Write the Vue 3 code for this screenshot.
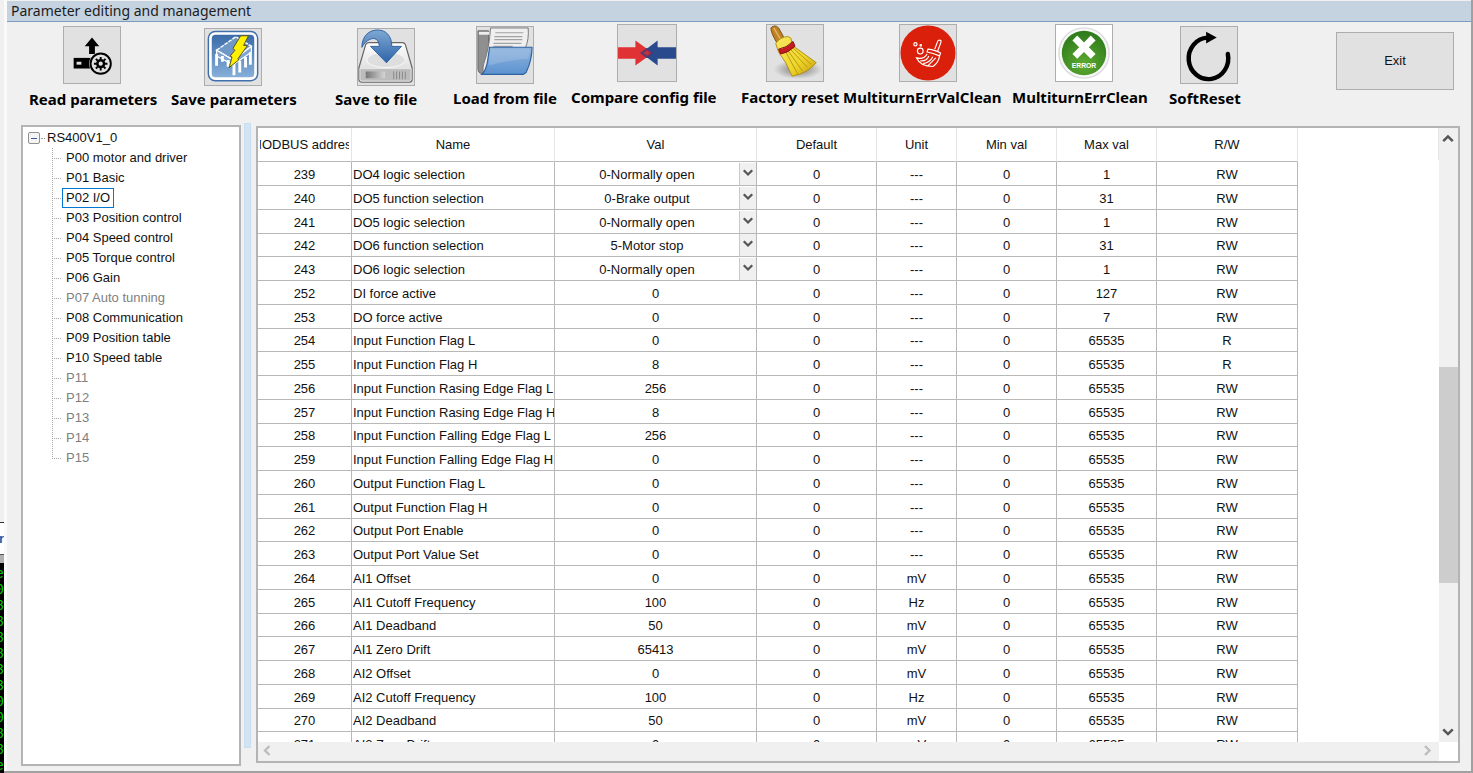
<script setup>
import { ref } from 'vue'

const groups = [
  { name: 'P00 motor and driver' },
  { name: 'P01 Basic' },
  { name: 'P02 I/O' },
  { name: 'P03 Position control' },
  { name: 'P04 Speed control' },
  { name: 'P05 Torque control' },
  { name: 'P06 Gain' },
  { name: 'P07 Auto tunning', off: true },
  { name: 'P08 Communication' },
  { name: 'P09 Position table' },
  { name: 'P10 Speed table' },
  { name: 'P11', off: true },
  { name: 'P12', off: true },
  { name: 'P13', off: true },
  { name: 'P14', off: true },
  { name: 'P15', off: true },
]
const selected = ref('P02 I/O')

const columns = ['MODBUS address', 'Name', 'Val', 'Default', 'Unit', 'Min val', 'Max val', 'R/W']

const row = (address, name, val, max = '65535', unit = '---', rw = 'RW', combo = false) => ({
  address, name, val, max, unit, rw, combo,
})
const rows = [
  row(239, 'DO4 logic selection', '0-Normally open', '1', '---', 'RW', true),
  row(240, 'DO5 function selection', '0-Brake output', '31', '---', 'RW', true),
  row(241, 'DO5 logic selection', '0-Normally open', '1', '---', 'RW', true),
  row(242, 'DO6 function selection', '5-Motor stop', '31', '---', 'RW', true),
  row(243, 'DO6 logic selection', '0-Normally open', '1', '---', 'RW', true),
  row(252, 'DI force active', '0', '127'),
  row(253, 'DO force active', '0', '7'),
  row(254, 'Input Function Flag L', '0', '65535', '---', 'R'),
  row(255, 'Input Function Flag H', '8', '65535', '---', 'R'),
  row(256, 'Input Function Rasing Edge Flag L', '256'),
  row(257, 'Input Function Rasing Edge Flag H', '8'),
  row(258, 'Input Function Falling Edge Flag L', '256'),
  row(259, 'Input Function Falling Edge Flag H', '0'),
  row(260, 'Output Function Flag L', '0'),
  row(261, 'Output Function Flag H', '0'),
  row(262, 'Output Port Enable', '0'),
  row(263, 'Output Port Value Set', '0'),
  row(264, 'AI1 Offset', '0', '65535', 'mV'),
  row(265, 'AI1 Cutoff Frequency', '100', '65535', 'Hz'),
  row(266, 'AI1 Deadband', '50', '65535', 'mV'),
  row(267, 'AI1 Zero Drift', '65413', '65535', 'mV'),
  row(268, 'AI2 Offset', '0', '65535', 'mV'),
  row(269, 'AI2 Cutoff Frequency', '100', '65535', 'Hz'),
  row(270, 'AI2 Deadband', '50', '65535', 'mV'),
  row(271, 'AI2 Zero Drift', '0', '65535', 'mV'),
]

const consoleLines = ['e', '0', '8', '8', '8', '8', '3', '3', '0', '0', '8', '8', 'e']
</script>

<template>
  <div class="screen">
    <div class="behind" aria-hidden="true">
      <div class="behind-top"></div>
      <div class="behind-tab">r</div>
      <div class="behind-console"><span v-for="(c, i) in consoleLines" :key="i">{{ c }}</span></div>
    </div>

    <main class="window">
      <h1 class="title">Parameter editing and management</h1>

      <div class="toolbar">
        <div class="tools">
          <div class="icons">
            <button id="t-read" class="tool mid" type="button">
              <svg viewBox="0 0 58 58">
                <path d="M29 11l7.500 9h-4.500v8h-6v-8h-4.500z" fill="#000" />
                <path d="M10 32h21v11h-21z" fill="#000" />
                <path d="M13 36h5v3h-5z" fill="#e1e1e1" />
                <circle cx="38" cy="38" r="12" fill="#e1e1e1" />
                <circle cx="38" cy="38" r="10.500" fill="#e1e1e1" stroke="#000" stroke-width="2" />
                <circle cx="38" cy="38" r="3.500" fill="none" stroke="#000" stroke-width="2.600" />
                <path d="M38 31v3M38 42v3M31 38h3M42 38h3M33 33l2 2M41 41l2 2M43 33l-2 2M35 41l-2 2" stroke="#000" stroke-width="2" />
              </svg>
            </button>
            <button id="t-save" class="tool low" type="button">
              <svg viewBox="0 0 58 58">
                <defs>
                  <linearGradient id="chip" x1="0" y1="0" x2="0" y2="1">
                    <stop offset="0" stop-color="#3b6ba8" /><stop offset="1" stop-color="#86afd9" />
                  </linearGradient>
                </defs>
                <rect x="3.500" y="2.500" width="51" height="51" rx="7" fill="#fff" stroke="#3f70ac" stroke-width="1.500" />
                <rect x="7" y="6" width="44" height="44" rx="4" fill="url(#chip)" />
                <path d="M12 22L32 8l16 10L29 32z" fill="#6f98c8" stroke="#fff" stroke-width="1.500" stroke-dasharray="4 1" />
                <path d="M12 22v6l17 9v-5zM29 37l19-13v-6L29 32z" fill="#7fa5d0" stroke="#fff" stroke-width="1.300" />
                <path d="M12 26v12M18 28v6M24 32v7M30 36v12M36 33v12M42 29v11M47 24v13" stroke="#fff" stroke-width="3" />
                <path d="M37 7h8l-5 10h4L34 31l1 1-10 8 3-11-2-1 5-6-2-2z" fill="#ffef00" stroke="#55531c" stroke-width="1" />
              </svg>
            </button>
            <button id="t-tofile" class="tool low" type="button">
              <svg viewBox="0 0 58 58">
                <defs>
                  <linearGradient id="disk" x1="0" y1="0" x2="0" y2="1">
                    <stop offset="0" stop-color="#fff" /><stop offset="1" stop-color="#d0d0d0" />
                  </linearGradient>
                  <linearGradient id="slot" x1="0" y1="0" x2="1" y2="0">
                    <stop offset="0" stop-color="#777" /><stop offset="1" stop-color="#d5d5d5" />
                  </linearGradient>
                  <linearGradient id="drop" x1="0" y1="0" x2="0" y2="1">
                    <stop offset="0" stop-color="#7fa8d4" /><stop offset="1" stop-color="#2e64a8" />
                  </linearGradient>
                </defs>
                <path d="M11 14h35q2 0 3 2l7 24v12q0 3-3 3H4q-3 0-3-3V40l7-24q1-2 3-2z" fill="url(#disk)" stroke="#666" stroke-width="1.300" />
                <ellipse cx="29" cy="32" rx="20" ry="8" fill="#dedede" stroke="#f8f8f8" />
                <path d="M2 41h53v11q0 2-2 2H4q-2 0-2-2z" fill="#bcbcbc" stroke="#eee" stroke-width=".8" />
                <path d="M8 44h20v7H8z" fill="url(#slot)" />
                <path d="M37 44v8M40 44v8M43 44v8M46 44v8M49 44v8" stroke="#888" stroke-width="1" />
                <path d="M4 19C4 7 12 1 20 1c9 0 15 6 15 17h10L29.500 35 13 18h9c0-7-5-10-10-7-3 1-6 4-8 8z" fill="url(#drop)" stroke="#2f61a0" stroke-width="1" />
              </svg>
            </button>
            <button id="t-load" class="tool mid" type="button">
              <svg viewBox="0 0 58 58">
                <defs>
                  <linearGradient id="folder" x1="0" y1="0" x2="0" y2="1">
                    <stop offset="0" stop-color="#92b6dd" /><stop offset="1" stop-color="#5b92cf" />
                  </linearGradient>
                </defs>
                <path d="M1 4h11v44H5q-4 0-4-5z" fill="#8f8f8f" stroke="#666" />
                <path d="M2 5h11v3H2z" fill="#eee" />
                <path d="M14 1h39q1 12-3 21l-8 20-34 5Q5 47 7 38q6-17 7-37z" fill="#efefef" stroke="#777" />
                <path d="M19 6h29M18 10h29M18 13h29M17 17h29M17 20h20" stroke="#a2a2a2" stroke-width="1.200" />
                <path d="M13 21h44q0 13-6 26l-3 2H5q4-3 6-14z" fill="url(#folder)" stroke="#2e62a1" stroke-width="1.200" />
                <path d="M14 23h41q-1 6-2 10-20 1-41 7z" fill="#a9c6e6" opacity=".4" />
              </svg>
            </button>
            <button id="t-compare" class="tool wide" type="button">
              <svg viewBox="0 0 60 58">
                <path d="M60 23H41v-7L24 29l17 13v-7h19z" fill="#2a4a8e" />
                <path d="M0 23h18v-7l18 13-18 13v-7H0z" fill="#e03134" />
                <path d="M24 29l6-4.500 6 4.500-6 4.500z" fill="#95304e" stroke="#4b3c77" stroke-width="1.500" />
                <path d="M27 29l3-2 3 2-3 2z" fill="#c63442" />
              </svg>
            </button>
            <button id="t-factory" class="tool" type="button">
              <svg viewBox="0 0 58 58">
                <defs>
                  <linearGradient id="straw" x1="0" y1="0" x2="1" y2="1">
                    <stop offset="0" stop-color="#f8e763" /><stop offset=".6" stop-color="#eed72b" /><stop offset="1" stop-color="#c69c0e" />
                  </linearGradient>
                  <radialGradient id="shade"><stop offset="0" stop-color="#777" /><stop offset="1" stop-color="#e1e1e1" /></radialGradient>
                </defs>
                <ellipse cx="32" cy="46" rx="25" ry="10" fill="url(#shade)" />
                <path d="M4 3q4-4 8 0l5 9-7 6Q4 8 4 3z" fill="#bd8128" stroke="#80500f" />
                <path d="M7 3l7 12" stroke="#e4b45c" stroke-width="1.500" />
                <path d="M9 19q5-7 13-7l3 2 1 7 25 18q-9 11-25 14Q20 38 12 28z" fill="url(#straw)" stroke="#b38d12" />
                <path d="M20 29l12 22M22 27l15 21M24 25l18 19M26 23l20 18" stroke="#bc960f" stroke-width="1" />
                <path d="M12 25q8-1 15-8l2 5q-7 7-15 8z" fill="#c51b20" stroke="#821014" />
              </svg>
            </button>
            <button id="t-valclean" class="tool" type="button">
              <svg viewBox="0 0 58 58">
                <circle cx="29" cy="29" r="28.500" fill="#da200b" />
                <g fill="none" stroke="#fff" stroke-width="1.200">
                  <circle cx="16" cy="20" r="1.700" /><circle cx="21.500" cy="21" r=".8" /><circle cx="21" cy="27" r="3" />
                  <path d="M36 25l3-8q1-2 3-1 1 0 0 3l-3 8" />
                  <path d="M29 25q8 1 13 4l-1 3q-7-3-13-4z" />
                  <path d="M28 30q-3 6-11 4 4 9 17 9 6-4 7-11M21 37q6 1 9-5M24 40q7-1 10-7M29 42l8-8" />
                </g>
              </svg>
            </button>
            <button id="t-errclean" class="tool" type="button">
              <svg viewBox="0 0 58 58">
                <defs>
                  <radialGradient id="green" cx=".5" cy=".75" r=".7">
                    <stop offset="0" stop-color="#5eaa31" /><stop offset="1" stop-color="#2f7d1c" />
                  </radialGradient>
                </defs>
                <rect width="58" height="58" fill="#fff" />
                <circle cx="29" cy="29" r="26" fill="#f7f7f7" stroke="#dcdcdc" stroke-width="1.500" />
                <circle cx="29" cy="29" r="23" fill="url(#green)" />
                <path d="M22 11l7 7 7-7 5 5-7 7 7 7-5 5-7-7-7 7-5-5 7-7-7-7z" fill="#fff" />
                <text x="29" y="45" text-anchor="middle" class="error-text">ERROR</text>
              </svg>
            </button>
            <button id="t-reset" class="tool mid" type="button">
              <svg viewBox="0 0 58 58">
                <path d="M48.500 28a20.500 21.500 0 1 1-21-17" fill="none" stroke="#000" stroke-width="4.600" stroke-linecap="round" />
                <path d="M26 5l11 6-11 6z" fill="#000" />
              </svg>
            </button>
          </div>
          <div class="labels">
            <label class="low" for="t-read">Read parameters</label>
            <label class="low" for="t-save">Save parameters</label>
            <label class="low" for="t-tofile">Save to file</label>
            <label class="mid" for="t-load">Load from file</label>
            <label for="t-compare">Compare config file</label>
            <label for="t-factory">Factory reset</label>
            <label for="t-valclean">MultiturnErrValClean</label>
            <label for="t-errclean">MultiturnErrClean</label>
            <label class="mid" for="t-reset">SoftReset</label>
          </div>
        </div>
        <button class="exit" type="button">Exit</button>
      </div>

      <div class="content">
        <nav class="tree">
          <div class="root">
            <button class="expander" type="button" aria-label="Collapse"></button>
            <span>RS400V1_0</span>
          </div>
          <ul>
            <li v-for="g in groups" :key="g.name">
              <button
                type="button"
                :class="{ selected: selected === g.name }"
                :disabled="g.off"
                @click="selected = g.name"
              >{{ g.name }}</button>
            </li>
          </ul>
        </nav>

        <div class="splitter"></div>

        <section class="grid-pane">
          <div class="sheet">
            <table>
              <colgroup>
                <col class="c-address" /><col class="c-name" /><col class="c-val" /><col class="c-default" />
                <col class="c-unit" /><col class="c-limit" /><col class="c-limit" /><col class="c-rw" />
              </colgroup>
              <thead>
                <tr>
                  <th v-for="c in columns" :key="c" scope="col"><span>{{ c }}</span></th>
                </tr>
              </thead>
              <tbody>
                <tr v-for="r in rows" :key="r.address">
                  <td>{{ r.address }}</td>
                  <td class="name">{{ r.name }}</td>
                  <td :class="{ choice: r.combo }">
                    <div v-if="r.combo" class="combo">
                      <select :aria-label="r.name"><option>{{ r.val }}</option></select>
                      <svg viewBox="0 0 17 22"><path d="M4 7l4.500 4.500L13 7" /></svg>
                    </div>
                    <template v-else>{{ r.val }}</template>
                  </td>
                  <td>0</td>
                  <td>{{ r.unit }}</td>
                  <td>0</td>
                  <td>{{ r.max }}</td>
                  <td>{{ r.rw }}</td>
                </tr>
              </tbody>
            </table>
            <div class="head-end"></div>
          </div>
          <div class="vscroll">
            <button type="button" aria-label="Scroll up"><svg viewBox="0 0 18 18"><path d="M4 12.500L8.500 8l4.500 4.500" /></svg></button>
            <div class="before"></div>
            <div class="thumb"></div>
            <div class="after"></div>
            <button type="button" aria-label="Scroll down"><svg viewBox="0 0 18 18"><path d="M4 5l4.500 4.500L13 5" /></svg></button>
          </div>
          <div class="hscroll">
            <button type="button" disabled aria-label="Scroll left"><svg viewBox="0 0 18 18"><path d="M11.500 4L7 8.500l4.500 4.500" /></svg></button>
            <button type="button" disabled aria-label="Scroll right"><svg viewBox="0 0 18 18"><path d="M4 4l4.500 4.500L4 13" /></svg></button>
          </div>
        </section>
      </div>
    </main>
  </div>
</template>

<style>
body {
  margin: 0;
  background: #f0f0f0;
}
</style>

<style scoped>
* {
  box-sizing: border-box;
}

.screen {
  display: flex;
  height: 100vh;
  overflow: hidden;
  background: #f0f0f0;
  color: #111;
  font: 13px/20px "Liberation Sans", Arial, sans-serif;
}

button,
select {
  margin: 0;
  padding: 0;
  border: 0;
  background: none;
  color: inherit;
  font: inherit;
}

svg {
  display: block;
}

/* Sliver of the window underneath */
.behind {
  display: flex;
  flex: 0 0 4px;
  flex-direction: column;
  overflow: hidden;
}

.behind-top {
  flex: 0 0 523px;
  border-bottom: 1px solid #333;
}

.behind-tab {
  display: flex;
  flex: 0 0 32px;
  align-items: center;
  justify-content: flex-end;
  border-bottom: 1px solid #555;
  background: #fff;
  color: #1a62a8;
  font-weight: bold;
}

.behind-console {
  display: flex;
  flex: 1;
  flex-direction: column;
  padding-top: 3px;
  border-top: 8px solid #b0b0b0;
  background: #000;
  color: #00d000;
  font: 14px/16px "Liberation Mono", monospace;
}

.behind-console span {
  display: flex;
  justify-content: flex-end;
}

.window {
  display: flex;
  flex: 1;
  flex-direction: column;
  min-width: 0;
  border: solid #a0a0a0;
  border-width: 0 2px 2px 0;
  padding: 1px 0 5px;
  box-shadow: inset 3px 0 #fafafa;
}

.title {
  margin: 0 0 0 3px;
  padding-left: 4px;
  border-bottom: 1px solid #7a9cbf;
  background: #c5d2e0;
  color: #1c1c1c;
  font: 14px/20px "Noto Sans", sans-serif;
}

.toolbar {
  display: flex;
  justify-content: space-between;
  padding: 2px 17px 0 25px;
}

.icons,
.labels {
  display: grid;
  align-items: start;
}

.icons {
  grid-template-columns: 141px 153px 119px 141px 149px 133px 156px 125px 58px;
  height: 62px;
  margin-left: 34px;
}

.labels {
  grid-template-columns: 142px 164px 118px 118px 170px 102px 169px 157px 80px;
  height: 24px;
  margin-bottom: 2px;
  color: #000;
  font: bold 15px/22px "Noto Sans", sans-serif;
  white-space: nowrap;
}

.low {
  align-self: end;
}

.mid {
  align-self: center;
}

.tool {
  width: 58px;
  height: 58px;
  border: 1px solid #adadad;
  background: #e1e1e1;
}

.tool.wide {
  width: 60px;
}

.tool svg {
  width: 100%;
  height: 100%;
}

.error-text {
  fill: #fff;
  font: bold 7px "Liberation Sans", sans-serif;
}

.exit {
  width: 118px;
  height: 58px;
  margin-top: 8px;
  border: 1px solid #adadad;
  background: #e1e1e1;
}

.content {
  display: flex;
  flex: 1;
  min-height: 0;
  padding: 11px 11px 0 17px;
}

.tree {
  flex: 0 0 220px;
  margin-top: 2px;
  padding: 1px 5px;
  border: 2px solid #b4b4b4;
  background: #fff;
  white-space: nowrap;
}

.root {
  display: flex;
  align-items: center;
}

.expander {
  display: flex;
  align-items: center;
  justify-content: center;
  width: 12px;
  height: 12px;
  border: 1px solid #919191;
  border-radius: 2px;
  background: #f4f4f4;
}

.root::before {
  order: 1;
  width: 4px;
  margin: 0 2px 0 1px;
  border-top: 1px dotted #a0a0a0;
  content: "";
}

.root span {
  order: 2;
}

.expander::after {
  width: 6px;
  height: 1px;
  background: #3b5b9b;
  content: "";
}

.tree ul {
  margin: 0 0 0 24px;
  padding: 0;
  list-style: none;
}

.tree li {
  display: flex;
  align-items: center;
  height: 20px;
}

.tree li::before {
  width: 10px;
  height: 20px;
  background:
    repeating-linear-gradient(90deg, #a8a8a8 0 1px, transparent 1px 2px) 0 10px / 10px 1px no-repeat,
    repeating-linear-gradient(#a8a8a8 0 1px, transparent 1px 2px) 0 0 / 1px 20px no-repeat;
  content: "";
}

.tree li:last-child::before {
  background-size: 10px 1px, 1px 10px;
}

.tree li button {
  height: 20px;
  padding: 0 3px;
  border: 1px solid transparent;
  line-height: 18px;
}

.tree li button.selected {
  border-color: #0078d7;
}

.tree li button:disabled {
  color: #808080;
}

.splitter {
  flex: 0 0 7px;
  margin: 0 5px 18px 3px;
  border: 1px solid #c6dff5;
  background: #d5e3f0;
}

.grid-pane {
  display: grid;
  flex: 1;
  grid-template-rows: minmax(0, 1fr) 19px;
  grid-template-columns: minmax(0, 1fr) 19px;
  min-width: 0;
  margin: 3px 0;
  border: 2px solid #b4b4b4;
  background: #fff;
}

.sheet {
  display: flex;
  overflow: hidden;
}

table {
  flex: none;
  width: 1040px;
  border-collapse: separate;
  border-spacing: 0;
  table-layout: fixed;
  line-height: 16px;
}

.c-address { width: 94px; }
.c-name { width: 203px; }
.c-val { width: 202px; }
.c-default { width: 120px; }
.c-unit { width: 80px; }
.c-limit { width: 100px; }
.c-rw { width: 141px; }

th {
  height: 34px;
  padding: 0 2px;
  border-right: 1px solid #e5e5e5;
  border-bottom: 1px solid #b8b8b8;
  font-weight: normal;
}

th span {
  display: flex;
  justify-content: center;
  overflow: hidden;
  white-space: nowrap;
}

td {
  height: 24px;
  padding: 2px 1px 0;
  border-right: 1px solid #b8b8b8;
  border-bottom: 1px solid #b8b8b8;
  overflow: hidden;
  text-align: center;
  white-space: nowrap;
}

tbody tr:nth-child(4n) td {
  height: 23px;
}

td.name {
  text-align: left;
}

td.choice {
  padding: 0;
}

.combo {
  display: flex;
  height: 22px;
}

.combo select {
  flex: 1;
  min-width: 0;
  padding-top: 2px;
  appearance: none;
  text-align-last: center;
}

.combo svg {
  width: 17px;
  border-left: 1px solid #c8c8c8;
  background: #f0f0f0;
}

.combo path,
.vscroll path,
.hscroll path {
  fill: none;
  stroke: #555;
  stroke-width: 2.4;
}

.hscroll path {
  stroke: #bdbdbd;
}

.head-end {
  flex: 1;
  height: 32px;
  border-right: 1px solid #e5e5e5;
}

.vscroll,
.hscroll {
  display: flex;
  background: #f0f0f0;
}

.vscroll {
  flex-direction: column;
}

.hscroll {
  justify-content: space-between;
}

.vscroll button,
.hscroll button {
  flex: 0 0 18px;
  height: 18px;
}

.before { flex: 221; }
.thumb { flex: 215; background: #cdcdcd; }
.after { flex: 141; }
</style>
